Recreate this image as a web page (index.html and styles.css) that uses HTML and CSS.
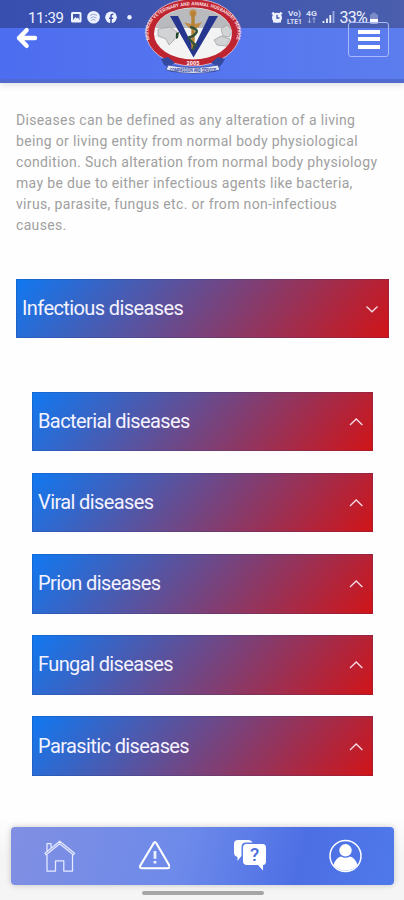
FILE: index.html
```html
<!DOCTYPE html>
<html lang="en">
<head>
<meta charset="utf-8">
<meta name="viewport" content="width=device-width">
<title>Diseases</title>
<link rel="stylesheet" href="styles.css">
</head>
<body>
<header class="header">
  <div class="status">
    <span class="time">11:39</span>
    <svg class="notices" width="74" height="14" viewBox="0 0 74 14">
      <rect x="1" y="2" width="10.5" height="10.5" rx="1.5" fill="#eef2ff"/>
      <rect x="3" y="4" width="6.5" height="6" fill="#4054aa"/>
      <path d="M3 10l2.3-3 1.6 1.6 1.2-1.2L9.5 10z" fill="#eef2ff"/>
      <circle cx="23.5" cy="7.3" r="6.3" fill="#eef2ff"/>
      <path d="M20 5.5q3.5-3 7 0M20.5 8q3-2.3 6 0M21 10.3q2.5-1.7 4.5 0" fill="none" stroke="#9aa8dc"/>
      <circle cx="41" cy="7.3" r="5.8" fill="#eef2ff"/>
      <path d="M41 13V6.3q0-2.2 2.4-2M39 8.2h4.2" fill="none" stroke="#4054aa" stroke-width="1.6"/>
      <circle cx="59.5" cy="7.2" r="2.2" fill="#eef2ff"/>
    </svg>
    <div class="signals">
      <svg width="14" height="14" viewBox="0 0 14 14">
        <path d="M3 3h8v9.5H3z" fill="#eef2ff"/><circle cx="7" cy="7.8" r="5" fill="#eef2ff"/>
        <path d="M2 4l2-1.5M12 4l-2-1.5" stroke="#eef2ff" stroke-width="1.7"/>
        <path d="M7 4.8V8h2.4" fill="none" stroke="#4054aa" stroke-width="1.3"/>
      </svg>
      <svg class="volte" width="16" height="16" viewBox="0 0 16 16"><text x="1" y="5.6" textLength="13" lengthAdjust="spacingAndGlyphs">Vo)</text><text x="0" y="13.6" textLength="15" lengthAdjust="spacingAndGlyphs">LTE1</text></svg>
      <svg class="network" width="12" height="14" viewBox="0 0 12 14"><text x="0" y="6" textLength="11" lengthAdjust="spacingAndGlyphs">4G</text><path d="M3.5 7.5V13M2 11.2L3.5 13 5 11.2M8 13V7.5M6.5 9.3L8 7.5l1.5 1.8" fill="none" stroke="#9babdc"/></svg>
      <svg class="bars" width="13" height="13" viewBox="0 0 13 13"><path d="M1.5 13v-2M5 13V8.5M8.3 13V5" stroke="#eef2ff" stroke-width="1.8"/><path d="M11.5 13V1" stroke="#9baae0" stroke-width="1.8"/></svg>
      <span class="percent">33%</span>
      <svg class="battery" width="10" height="13" viewBox="0 0 10 13"><path d="M1 3.5q0-1.5 1.6-1.5h.8V.5h3V2h.8Q9 2 9 3.5V8H1z" fill="#7c8cc9"/><path d="M1 7h8v3.5q0 1-1 1H2q-1 0-1-1z" fill="#fff"/></svg>
    </div>
  </div>
  <div class="bar">
    <svg class="back" width="24" height="24" viewBox="0 0 24 24"><path d="M20 12H4M11.6 4.2L4 12l7.6 7.8" fill="none" stroke="#fff" stroke-width="4.4" stroke-linecap="round" stroke-linejoin="round"/></svg>
    <button class="menu" aria-label="Menu"><i></i><i></i><i></i></button>
  </div>
  <svg class="logo" width="98" height="76" viewBox="0 0 98 76">
    <defs>
      <path id="ring" d="M17 54.5C-14 30 13 4.3 49 4.3S112 30 81 54.5"/>
      <clipPath id="globe"><ellipse cx="49" cy="34" rx="39" ry="26"/></clipPath>
    </defs>
    <ellipse cx="49" cy="32.5" rx="47" ry="33.5" fill="#bf2431" stroke="#ddcbe0" stroke-width=".8"/>
    <ellipse cx="49" cy="33.5" rx="39" ry="26" fill="#f3f3f3"/>
    <g clip-path="url(#globe)">
      <path d="M8 28V5h82v23z" fill="#b9babd"/>
      <path d="M14 29l12-2 7 5-2 7-6 6-3-6-8-3zM77 29l6-4 6 6-4 6-6-1zM70 40l7-4 9 3-4 7-9-1z" fill="#d2d3d4" stroke="#9b9da2" stroke-width=".7"/>
      <path d="M32 33l3-1-1 6-2 1z" fill="#24472c"/>
    </g>
    <text class="ringtext"><textPath href="#ring" startOffset="50%">MIZORAM VETERINARY AND ANIMAL HUSBANDRY SERVICE</textPath></text>
    <path d="M26 16h8l15.5 32L65 16h9L49.5 57.5z" fill="#26358e"/>
    <path d="M40 22q9 4 18 0l-4 6h-9z" fill="#c18b48"/>
    <circle cx="49" cy="13" r="3.6" fill="#c18b48"/>
    <path d="M49 12v37" stroke="#b58237" stroke-width="3.4"/>
    <path d="M46 27q9 2 6 6t-6 4 2 5 4 3-3 5" fill="none" stroke="#31513c" stroke-width="2.4"/>
    <path d="M17 59l7-2 7 6-7 4-4-2zM81 59l-7-2-7 6 8 4 3-3z" fill="#3449a0"/>
    <path d="M24 65q25 5 50 0l2 5q-27 7-54 0z" fill="#dfe3f5" stroke="#3d51a5" stroke-width=".9"/>
    <text class="year" x="49" y="64.6">2005</text>
    <text class="motto" x="49" y="71.6" textLength="46" lengthAdjust="spacingAndGlyphs">COMPASSION AND SERVICE</text>
  </svg>
</header>
<main>
  <p class="intro">Diseases can be defined as any alteration of a living<br>being or living entity from normal body physiological<br>condition. Such alteration from normal body physiology<br>may be due to either infectious agents like bacteria,<br>virus, parasite, fungus etc. or from non-infectious<br>causes.</p>
  <section class="group">
    <div class="panel"><span>Infectious diseases</span><svg width="14" height="8" viewBox="0 0 14 8"><path d="M1.5 1.5L7 6.8l5.5-5.3"/></svg></div>
    <div class="children">
      <div class="panel"><span>Bacterial diseases</span><svg width="14" height="8" viewBox="0 0 14 8"><path d="M1 7l6.2-6 6.2 6"/></svg></div>
      <div class="panel"><span>Viral diseases</span><svg width="14" height="8" viewBox="0 0 14 8"><path d="M1 7l6.2-6 6.2 6"/></svg></div>
      <div class="panel"><span>Prion diseases</span><svg width="14" height="8" viewBox="0 0 14 8"><path d="M1 7l6.2-6 6.2 6"/></svg></div>
      <div class="panel"><span>Fungal diseases</span><svg width="14" height="8" viewBox="0 0 14 8"><path d="M1 7l6.2-6 6.2 6"/></svg></div>
      <div class="panel"><span>Parasitic diseases</span><svg width="14" height="8" viewBox="0 0 14 8"><path d="M1 7l6.2-6 6.2 6"/></svg></div>
    </div>
  </section>
</main>
<footer>
  <nav class="tabs">
    <svg width="34" height="34" viewBox="0 0 34 34" fill="none" stroke="#e6eaff" stroke-width="1.25" stroke-linejoin="round"><path d="M3 14.3L17.7 2.2 32.5 14.3l-1.3 1.5L17.7 4.8 4.2 15.8zM5 12V4.5h4V8.5M5 16v16h8.5V21.8h8.3V32H30.5V16"/></svg>
    <svg width="34" height="34" viewBox="0 0 34 34" fill="none" stroke="#fff" stroke-width="2.1" stroke-linejoin="round"><path d="M17.8 4q1.2-2 2.4 0l13 22.2q1.5 3-1.7 3H6.2q-3.2 0-1.7-3z"/><path d="M19 12v7.8M19 22v2.6" stroke-width="2.8" stroke="#eef1ff"/></svg>
    <svg width="36" height="34" viewBox="0 0 36 34"><path d="M7 1h10.5q3 0 4 2.6H15q-4.5 0-4.5 4.4v9q-1.5 1.5-4 5V18Q3 17 3 13.5V5q0-4 4-4z" fill="#fff"/><path d="M15.5 5h16Q35 5 35 9v13q0 4-3 4v5.5L27 26H16q-4 0-4-4V9q0-4 3.5-4z" fill="#fff"/><text class="question" x="23.5" y="22.3">?</text></svg>
    <svg width="36" height="34" viewBox="0 0 36 34"><circle cx="18.5" cy="17" r="15.5" fill="none" stroke="#fff" stroke-width="1.5"/><circle cx="18.5" cy="11.3" r="6.2" fill="#fff"/><path d="M6.5 26q2-7 7.5-8.5 4.5 2.5 9 0 5.5 1.5 7.5 8.5-5 5.8-12 5.8t-12-5.8z" fill="#fff"/></svg>
  </nav>
  <div class="handle"></div>
</footer>
</body>
</html>
```
FILE: styles.css
```css
* { box-sizing: border-box; }
body {
  margin: 0;
  width: 404px;
  height: 900px;
  overflow: hidden;
  display: flex;
  flex-direction: column;
  background: #fefefe;
  font-family: Roboto, sans-serif;
}
.header {
  position: relative;
  flex: none;
  height: 83px;
  background: linear-gradient(90deg, #4d6df0, #5c7dee);
  border-bottom: 4px solid #4f6bcf;
  box-shadow: 0 2px 7px #0002;
}
.status {
  height: 28px;
  padding: 5px 25px 0 28px;
  display: flex;
  background: linear-gradient(90deg, #384fb0, #4a5ead);
  color: #eef2ff;
}
.time { width: 42px; font-size: 15px; line-height: 26px; letter-spacing: -.35px; }
.notices { margin-top: 5px; }
.signals { margin-left: auto; display: flex; height: 23px; }
.signals > svg { margin-top: 5px; }
.signals > .volte, .signals > .network { font-size: 6.3px; font-weight: 700; fill: #d5dcf6; margin-left: 3px; }
.signals > .bars { margin: 5px 4px 0 4px; }
.percent { font-size: 16px; line-height: 26px; letter-spacing: -.7px; }
.signals > .battery { margin: 7px 0 0 2px; }
.bar {
  position: relative;
  margin-top: -6px;
  padding: 0 15px;
  display: flex;
  justify-content: space-between;
}
.back { margin-top: 4px; }
.menu {
  width: 41px;
  height: 35px;
  padding: 0 8px 1px;
  border: 1px solid #a7b9f8;
  border-radius: 3px;
  background: transparent;
  display: flex;
  flex-direction: column;
  justify-content: center;
  align-items: center;
  gap: 3.5px;
}
.menu i { width: 22px; height: 4px; background: #fff; }
.logo { position: absolute; left: 144px; top: 0; }
.ringtext { font: 700 4.8px Roboto, sans-serif; fill: #f6dadd; text-anchor: middle; dominant-baseline: middle; }
.year { font: 900 5.5px Roboto, sans-serif; fill: #f9e4e6; text-anchor: middle; }
.motto { font: 700 5px Roboto, sans-serif; fill: #3a4b9e; text-anchor: middle; }
.intro {
  margin: 27px 16px 42.3px;
  color: #a0a0a0;
  font-size: 14px;
  line-height: 21.06px;
  letter-spacing: .34px;
  white-space: nowrap;
}
.group { padding: 0 15px 0 16px; }
.panel {
  height: 59.5px;
  padding: 0 10px 1px 6px;
  display: flex;
  align-items: center;
  justify-content: space-between;
  background: linear-gradient(130deg, #1079f2, #d11417) border-box;
  border: 1px solid #20307033;
  color: #f5f3ff;
  font-size: 20px;
  letter-spacing: -.6px;
}
.panel span { margin-left: -1px; }
.panel svg { fill: none; stroke: #f5dce6; stroke-width: 1.3; margin: 2px -1px 0 0; }
.children { padding: 53.5px 16px 0; display: flex; flex-direction: column; gap: 21.7px; }
footer { margin-top: auto; height: 83px; padding: 10px 10px 0 11px; background: linear-gradient(#fefefe, #f5f5f5 45%); }
.tabs {
  height: 58px;
  padding: 0 31px;
  display: flex;
  align-items: center;
  justify-content: space-between;
  border-radius: 4px;
  background: linear-gradient(105deg, #808fe2, #6d8aea 45%, #4d6fe4 75%, #4f79ea);
  box-shadow: 0 0 6px #0003;
}
.question { font: 500 19px Roboto, sans-serif; fill: #4e6fe0; text-anchor: middle; }
.handle { width: 122px; height: 4px; margin: 6px auto 0; border-radius: 2px; background: #a6a6a6; }
```
